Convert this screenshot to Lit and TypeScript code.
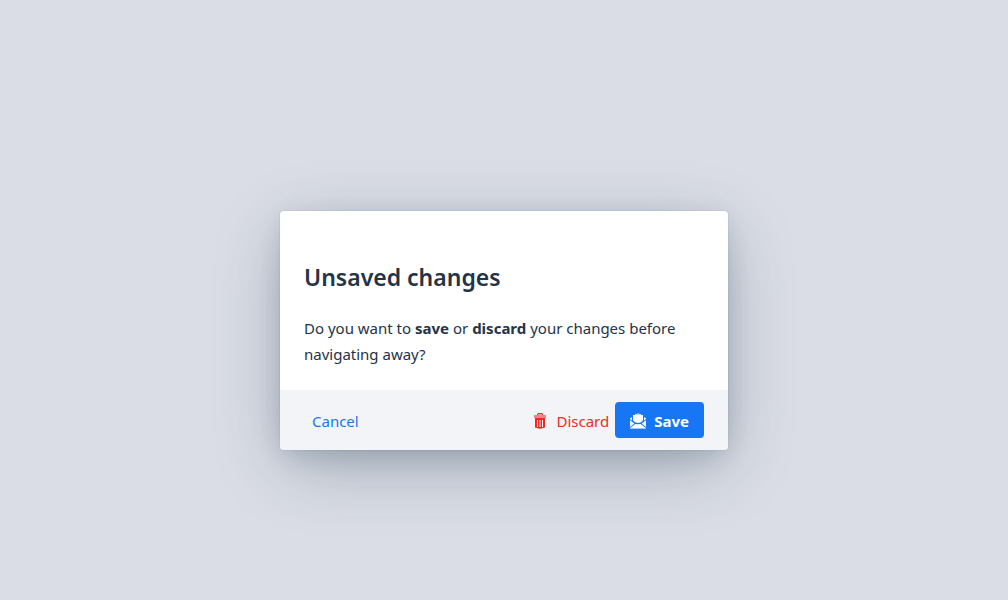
import { LitElement, html, css } from "lit";
import { customElement } from "lit/decorators.js";

@customElement("app-root")
export class AppRoot extends LitElement {
  static styles = css`
    :host {
      display: flex;
      align-items: center;
      justify-content: center;
      min-height: 100vh;
      padding: 16px;
      box-sizing: border-box;
      background: #dadde5;
      color: #243348;
      font: 15px/26px "Segoe UI", "Noto Sans", "Open Sans", sans-serif;
    }
    .dialog {
      width: 100%;
      max-width: 448px;
      margin-top: 61px;
      border-radius: 4px;
      overflow: hidden;
      background: #fff;
      box-shadow: 0 0 0 1px hsla(214, 61%, 25%, 0.05),
        0 6px 24px -3px hsla(214, 53%, 23%, 0.16),
        0 18px 64px -8px hsla(210, 35%, 23%, 0.38);
    }
    .content {
      padding: 50px 24px 23px;
    }
    h2 {
      margin: 0 0 22px;
      font-size: 23px;
      line-height: 32px;
      font-weight: 600;
    }
    p {
      margin: 0;
    }
    b {
      font-weight: 700;
    }
    footer {
      display: flex;
      align-items: center;
      padding: 12px 24px;
      background: #f3f4f8;
    }
    button {
      display: flex;
      align-items: center;
      gap: 8px;
      height: 36px;
      padding: 2px 6px 0;
      border: 0;
      border-radius: 4px;
      background: none;
      color: #1676f3;
      font: inherit;
      cursor: pointer;
    }
    .cancel {
      margin-right: auto;
      padding: 2px 8px 0;
    }
    .discard {
      color: #f02a22;
    }
    .save {
      padding: 2px 15px 0;
      background: #1676f3;
      color: #fff;
      font-weight: 700;
    }
    svg {
      width: 16px;
      height: 16px;
      fill: currentColor;
    }
  `;

  render() {
    return html`
      <section class="dialog" role="dialog" aria-labelledby="title">
        <div class="content">
          <h2 id="title">Unsaved changes</h2>
          <p>
            Do you want to <b>save</b> or <b>discard</b> your changes before
            navigating away?
          </p>
        </div>
        <footer>
          <button class="cancel">Cancel</button>
          <button class="discard">
            <svg viewBox="0 0 16 16" aria-hidden="true">
              <path d="M5 2V.5h1V0h4v.5h1V2h-1V1H6v1z" />
              <path d="M5 1h6v1H5z" fill-opacity="0.4" />
              <path d="M2 2h12v3H2z" fill-opacity="0.55" />
              <path
                fill-rule="evenodd"
                d="M3 5h10v9.500Q8 16.800 3 14.500zM5 7v7h1V7zM7.500 7v7h1V7zM10 7v7h1V7z"
              />
            </svg>
            Discard
          </button>
          <button class="save">
            <svg viewBox="0 0 16 16" aria-hidden="true">
              <path d="M5 2V1h1.500L7 .4h2l.5.6H11v1z" fill-opacity="0.75" />
              <path d="M3 2h10v5.500L10.500 9.500 8 10 5.500 9.500 3 7.500z" />
              <path d="M0 5.500L2 4v3.400L0 6zM16 5.500L14 4v3.400L16 6z" />
              <path d="M0 7.200l4.400 3.300L0 14zM16 7.200l-4.400 3.300L16 14z" />
              <path d="M5.300 10.900L8 11.300l2.700-.4L15.800 15H.2z" />
              <path d="M0 15h16v1H0z" fill-opacity="0.6" />
            </svg>
            Save
          </button>
        </footer>
      </section>
    `;
  }
}
